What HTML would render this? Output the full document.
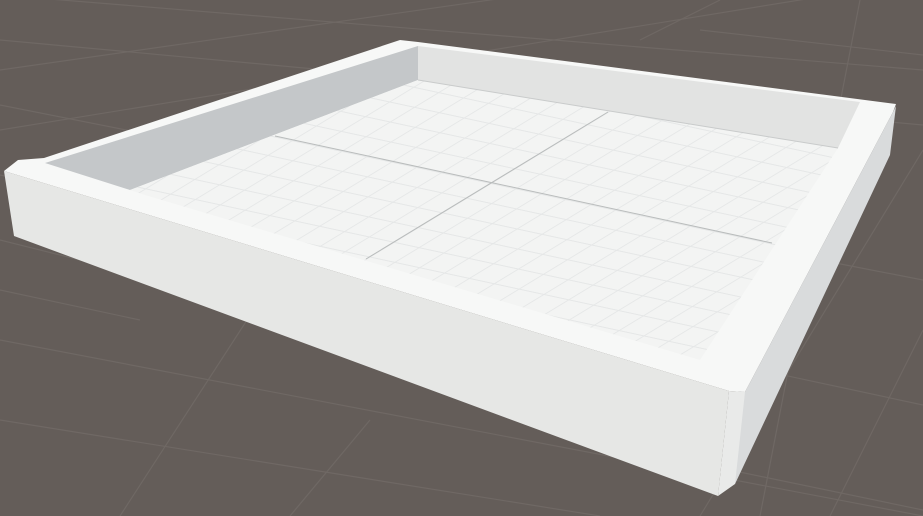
<!DOCTYPE html>
<html><head><style>html,body{margin:0;padding:0;background:#625b57;overflow:hidden}svg{display:block}</style></head>
<body>
<svg width="923" height="516" viewBox="0 0 923 516" xmlns="http://www.w3.org/2000/svg">
<defs>
<pattern id="g" patternUnits="userSpaceOnUse" width="1" height="1" patternTransform="matrix(24.85,5.35,-24.2,14.7,491,183)">
<rect x="0" y="0" width="1" height="1" fill="#f3f4f3"/>
<rect x="0" y="0" width="1" height="0.05" fill="#e5e7e7"/>
<rect x="0" y="0" width="0.05" height="1" fill="#e5e7e7"/>
</pattern>
<clipPath id="fc"><polygon points="130,190 418,80 838,148 700,360 145,195"/></clipPath>
</defs>
<rect width="923" height="516" fill="#645d59"/>
<g stroke="#6f6864" stroke-width="1.2" fill="none">
<line x1="0" y1="70" x2="560" y2="-10"/>
<line x1="0" y1="130" x2="923" y2="-20"/>
<line x1="0" y1="40" x2="923" y2="125"/>
<line x1="0" y1="-5" x2="923" y2="70"/>
<line x1="0" y1="105" x2="480" y2="200"/>
<line x1="0" y1="175" x2="300" y2="240"/>
<line x1="0" y1="240" x2="200" y2="290"/>
<line x1="0" y1="340" x2="923" y2="516"/>
<line x1="700" y1="30" x2="923" y2="55"/>
<line x1="820" y1="260" x2="923" y2="280"/>
<line x1="760" y1="370" x2="923" y2="405"/>
<line x1="730" y1="470" x2="923" y2="510"/>
<line x1="0" y1="420" x2="600" y2="516"/>
<line x1="923" y1="150" x2="700" y2="516"/>
<line x1="923" y1="330" x2="830" y2="516"/>
<line x1="860" y1="0" x2="760" y2="516"/>
<line x1="0" y1="290" x2="140" y2="320"/>
<line x1="120" y1="516" x2="260" y2="300"/>
<line x1="290" y1="516" x2="370" y2="420"/>
<line x1="720" y1="0" x2="640" y2="40"/>
</g>
<polygon points="4,171 18,160 44,158 400,40 418,42 896,104 893,112 745,392 729,391" fill="#f7f8f7"/>
<polygon points="45,163 418,46 418,80 130,190" fill="#c4c7c9"/>
<polygon points="418,46 860,102 838,148 418,80" fill="#e2e3e2"/>
<g clip-path="url(#fc)">
<rect x="0" y="0" width="923" height="516" fill="url(#g)"/>
<line x1="275" y1="136" x2="772" y2="243" stroke="#b9bcbc" stroke-width="1"/>
<line x1="608" y1="112" x2="366" y2="259" stroke="#b9bcbc" stroke-width="1"/>
</g>
<line x1="418" y1="80" x2="838" y2="148" stroke="#c9cbcb" stroke-width="1"/>
<polygon points="4,171 729,391 718,496 14,236" fill="#e6e7e5"/>
<polygon points="893,112 896,106 890,155 735,484 733,470 740,391 745,392" fill="#d9dbdc"/>
<polygon points="729,391 745,392 735,484 718,496" fill="#e9eae9"/>
</svg>
</body></html>
